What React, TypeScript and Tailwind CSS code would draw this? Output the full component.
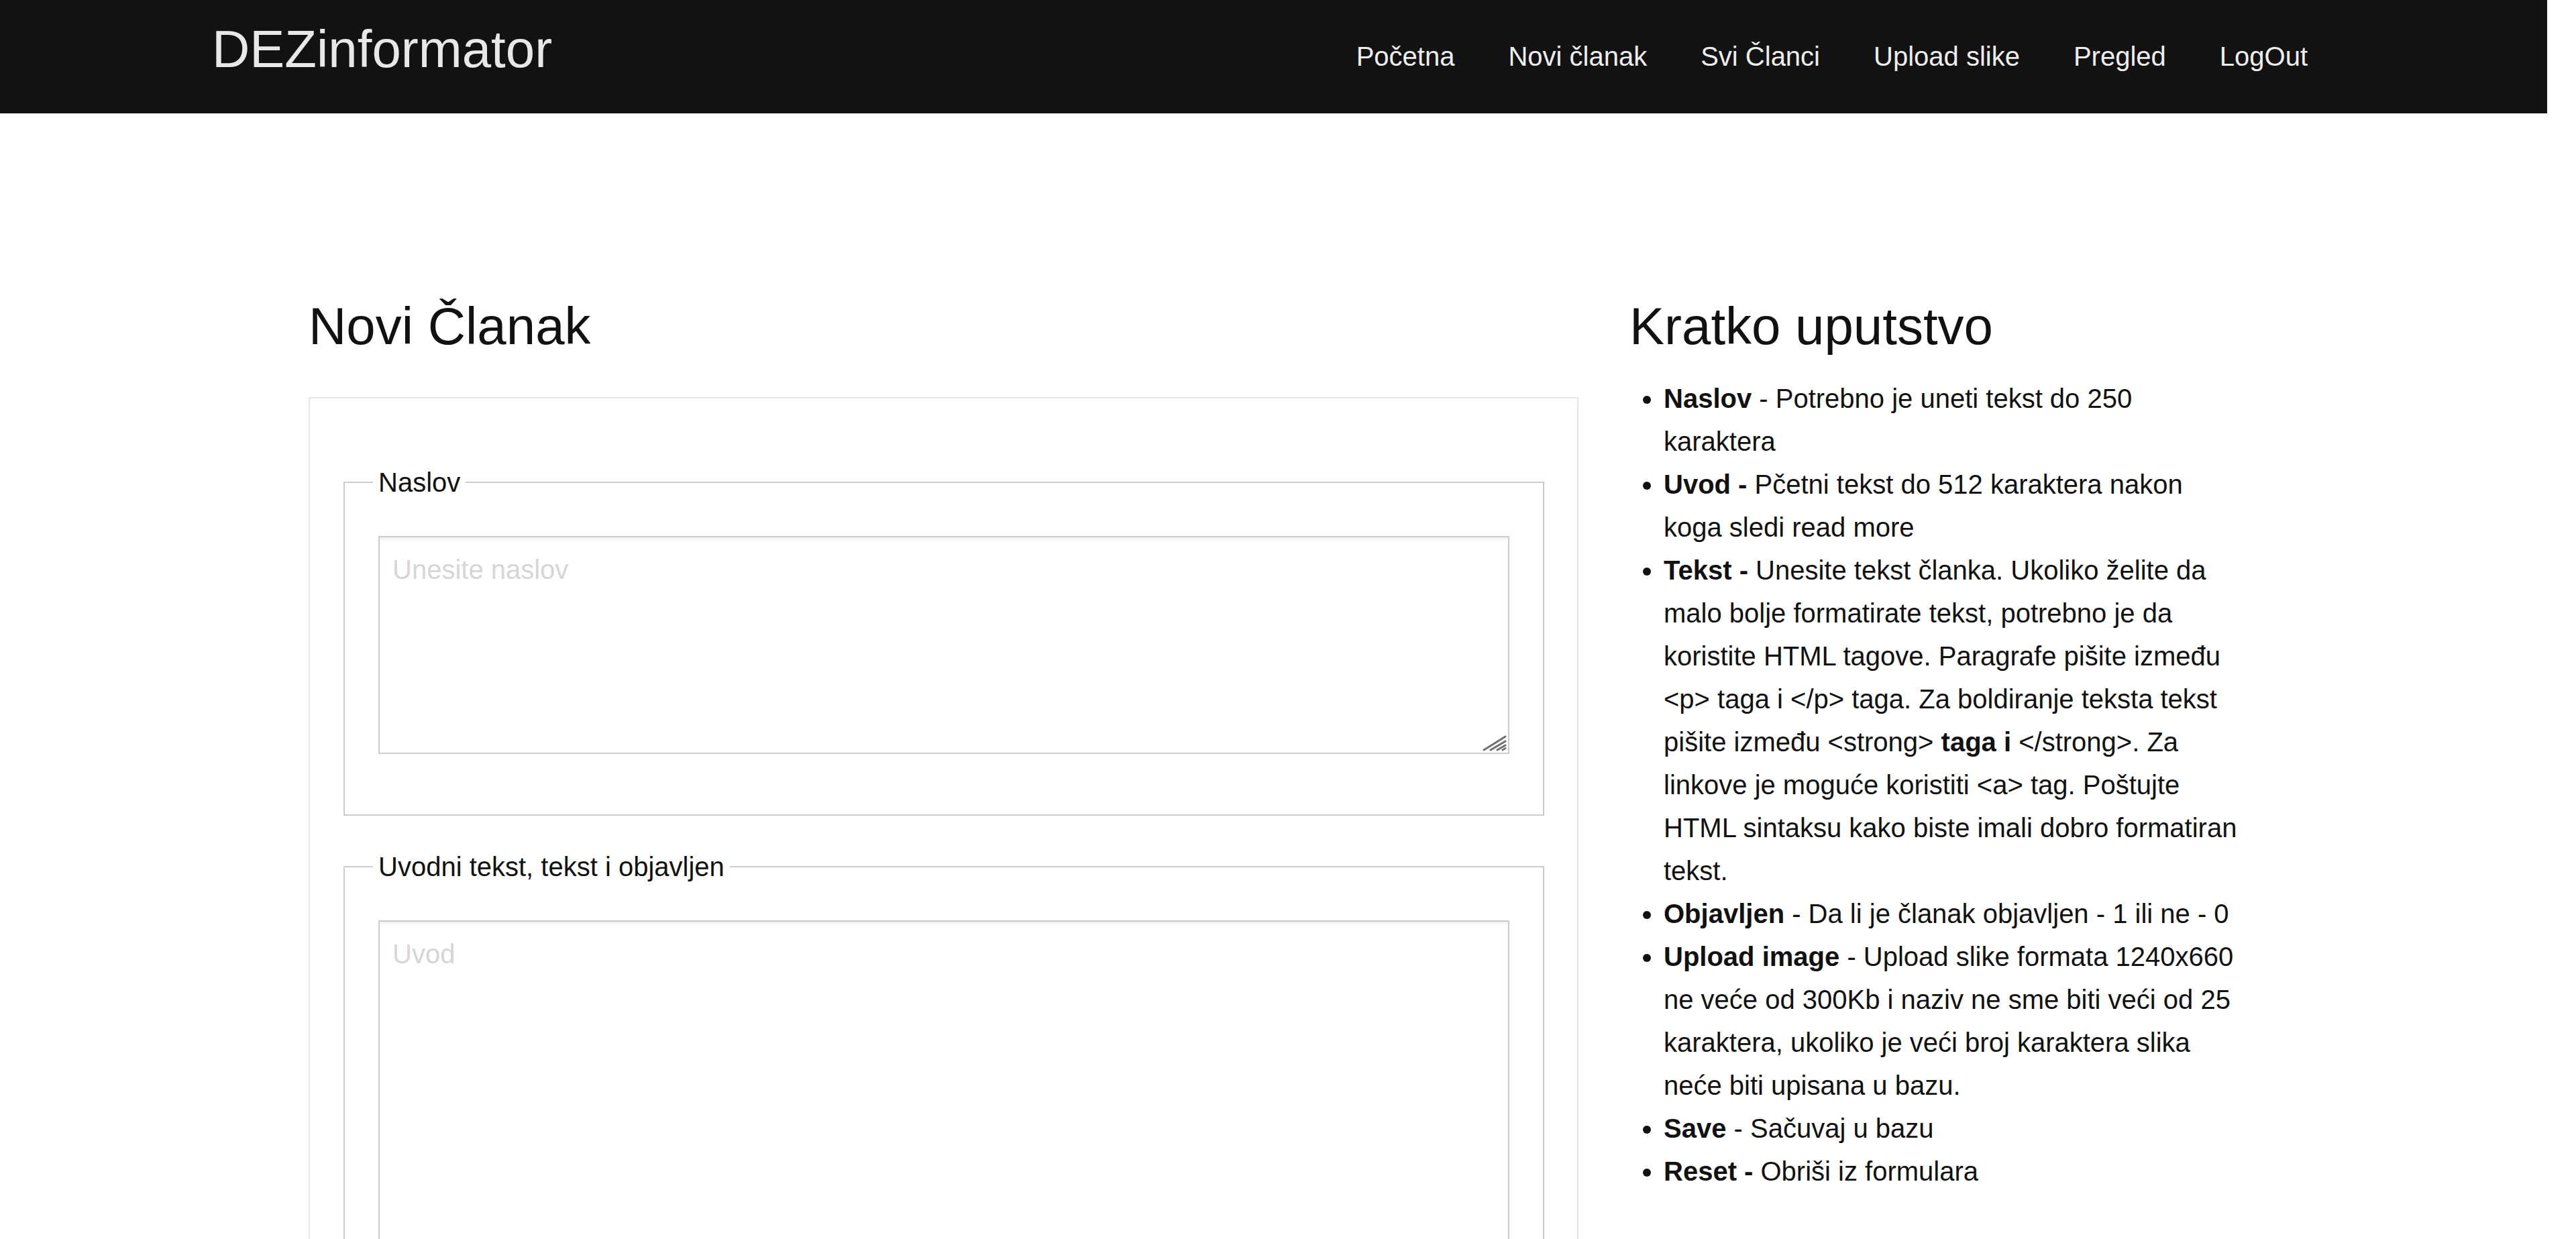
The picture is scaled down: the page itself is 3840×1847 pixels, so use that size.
import React from "react";

function Handle() {
  return (
    <svg
      className="absolute right-[4px] bottom-[4px] pointer-events-none"
      width="36"
      height="36"
      viewBox="0 0 36 36"
    >
      <g stroke="#707070" strokeWidth="3" strokeLinecap="round">
        <line x1="2" y1="34" x2="34" y2="14" />
        <line x1="12" y1="34" x2="34" y2="21" />
        <line x1="22" y1="34" x2="34" y2="27" />
        <line x1="30" y1="34" x2="34" y2="31.5" />
      </g>
    </svg>
  );
}

function Field({
  legend,
  placeholder,
  height,
  pb,
}: {
  legend: string;
  placeholder: string;
  height: string;
  pb: string;
}) {
  return (
    <fieldset className={`border-2 border-[#cccccc] px-[50px] ${pb}`}>
      <legend className="-ml-[8px] px-[8px] text-[40px] leading-[64px] text-[#111]">
        {legend}
      </legend>
      <div className={`relative mt-[48px] ${height}`}>
        <textarea
          placeholder={placeholder}
          className="block w-full h-full resize-none border-2 border-[#cccccc] bg-white px-[19px] pt-[16px] text-[40px] leading-[64px] text-[#333] placeholder:text-[#d6d6d6] shadow-[inset_0_3px_3px_rgba(0,0,0,0.06)] outline-none"
        />
        <Handle />
      </div>
    </fieldset>
  );
}

export default function App() {
  const nav = ["Početna", "Novi članak", "Svi Članci", "Upload slike", "Pregled", "LogOut"];
  return (
    <div className="w-[3840px] h-[1847px] overflow-hidden bg-white font-['Liberation_Sans',Arial,sans-serif] text-[#111] flex">
      <div className="w-[3797px] flex flex-col">
        <header className="h-[169px] shrink-0 bg-[#121212] flex items-start justify-between pl-[316px] pr-[317px]">
          <div className="mt-[34px] text-[78px] leading-none text-[#e8e8e8]">DEZinformator</div>
          <ul className="mt-[64px] flex">
            {nav.map((n) => (
              <li key={n} className="px-[40px] text-[40px] leading-none text-[#eeeeee]">
                {n}
              </li>
            ))}
          </ul>
        </header>

        <main className="flex pl-[460px] pt-[278px] gap-[70px]">
          <section className="w-[1893px] shrink-0">
            <h2 className="text-[78px] leading-none text-[#111]">Novi Članak</h2>
            <div className="mt-[67px] border-2 border-[#e6e6e6] pl-[50px] pr-[49px] pt-[93px]">
              <Field legend="Naslov" placeholder="Unesite naslov" height="h-[325px]" pb="pb-[90px]" />
              <div className="mt-[44px]">
                <Field
                  legend="Uvodni tekst, tekst i objavljen"
                  placeholder="Uvod"
                  height="h-[540px]"
                  pb="pb-[90px]"
                />
              </div>
            </div>
          </section>

          <section className="w-[921px] shrink-0 ml-[2px]">
            <h2 className="ml-[4px] text-[78px] leading-none text-[#111]">Kratko uputstvo</h2>
            <ul className="mt-[37px] list-disc pl-[55px] w-[919px] text-[40px] leading-[64px] text-[#111]">
              <li>
                <b>Naslov</b> - Potrebno je uneti tekst do 250 karaktera
              </li>
              <li>
                <b>Uvod -</b> Pčetni tekst do 512 karaktera nakon koga sledi read more
              </li>
              <li>
                <b>Tekst -</b> Unesite tekst članka. Ukoliko želite da malo bolje formatirate tekst, potrebno je da
                koristite HTML tagove. Paragrafe pišite između &lt;p&gt; taga i &lt;/p&gt; taga. Za boldiranje teksta
                tekst pišite između &lt;strong&gt; <b>taga i</b> &lt;/strong&gt;. Za linkove je moguće koristiti
                &lt;a&gt; tag. Poštujte HTML sintaksu kako biste imali dobro formatiran tekst.
              </li>
              <li>
                <b>Objavljen</b> - Da li je članak objavljen - 1 ili ne - 0
              </li>
              <li>
                <b>Upload image</b> - Upload slike formata 1240x660 ne veće od 300Kb i naziv ne sme biti veći od 25
                karaktera, ukoliko je veći broj karaktera slika neće biti upisana u bazu.
              </li>
              <li>
                <b>Save</b> - Sačuvaj u bazu
              </li>
              <li>
                <b>Reset -</b> Obriši iz formulara
              </li>
            </ul>
          </section>
        </main>
      </div>
      <div className="flex-1 bg-white" />
    </div>
  );
}
